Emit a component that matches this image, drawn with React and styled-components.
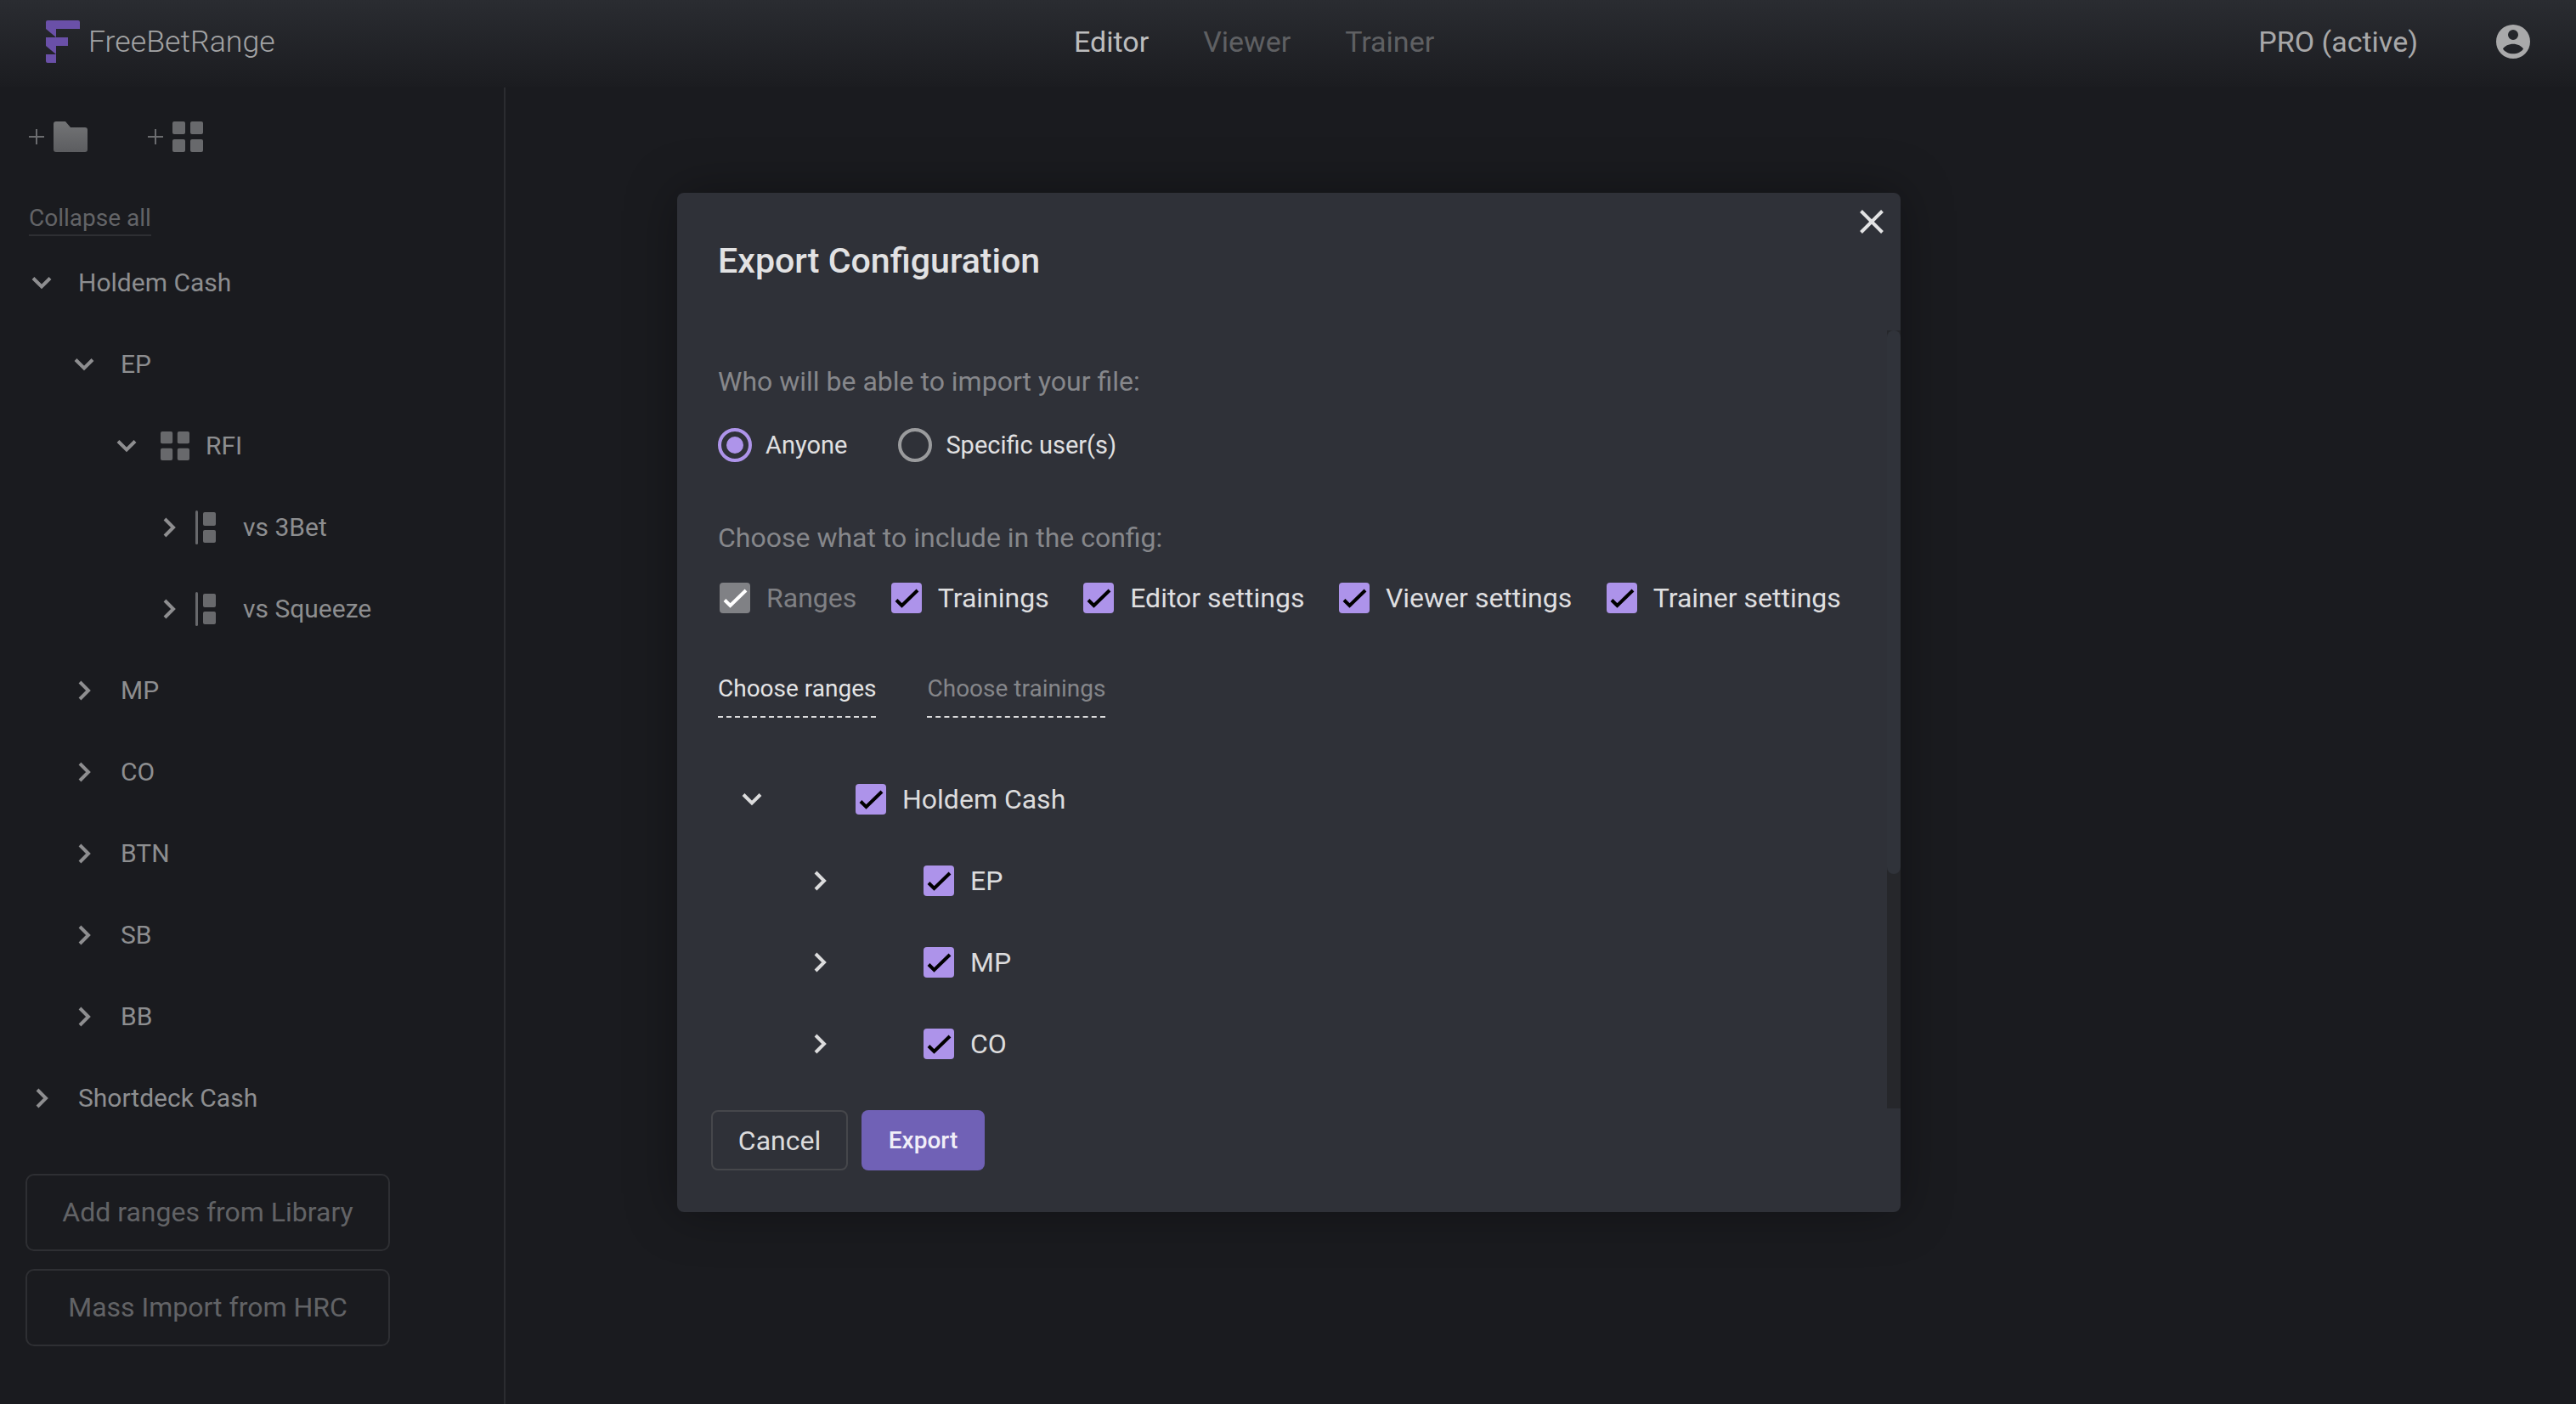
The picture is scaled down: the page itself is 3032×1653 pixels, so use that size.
import React from "react";
import styled, { createGlobalStyle } from "styled-components";

const Global = createGlobalStyle`
  html, body { margin: 0; padding: 0; background: #1a1b1f; }
  * { box-sizing: border-box; }
  #root { height: 100vh; overflow: hidden; }
`;

const Page = styled.div`
  position: relative;
  height: 1653px;
  background: #1a1b1f;
  font-family: Roboto, "Liberation Sans", sans-serif;
  display: flex;
  flex-direction: column;
  overflow: hidden;
`;

const Header = styled.header`
  flex: 0 0 103px;
  display: flex;
  align-items: center;
  padding: 0 54px 6px;
  background: linear-gradient(180deg, #2a2c31 0%, #1b1c20 100%);
`;

const Brand = styled.div`
  flex: 0 0 1210px;
  display: flex;
  align-items: center;
  gap: 10px;
  font-size: 35.7px;
  font-weight: 300;
  color: #a3a4a5;
`;

const Nav = styled.nav`
  display: flex;
  gap: 64px;
`;

const NavLink = styled.span`
  font-size: 34px;
  font-weight: 400;
  color: ${(p) => (p.$active ? "#bdbdbe" : "#5f6063")};
`;

const HeaderRight = styled.div`
  margin-left: auto;
  display: flex;
  align-items: center;
  gap: 92px;
  font-size: 34px;
  color: #a8a8a9;
`;

const Body = styled.div`
  flex: 1;
  display: flex;
  min-height: 0;
`;

const Sidebar = styled.aside`
  flex: 0 0 595px;
  border-right: 2px solid #2b2c30;
  padding-top: 40px;
`;

const Toolbar = styled.div`
  display: flex;
  align-items: center;
  height: 36px;
  padding-left: 34px;
`;

const ToolGroup = styled.div`
  display: flex;
  align-items: center;
  gap: 11px;
  margin-right: 71px;
`;

const Collapse = styled.span`
  display: inline-block;
  margin: 62px 0 0 34px;
  height: 37px;
  line-height: 32px;
  font-size: 28px;
  color: #636467;
  border-bottom: 2px solid #2e2f33;
`;

const Tree = styled.div`
  margin-top: 7px;
`;

const Row = styled.div`
  display: flex;
  align-items: center;
  height: 96px;
  padding-left: ${(p) => 37 + p.$depth * 50}px;
`;

const ChevronBox = styled.span`
  flex: 0 0 24px;
  display: flex;
  align-items: center;
  justify-content: center;
`;

const RowLabel = styled.span`
  margin-left: ${(p) => p.$gap}px;
  padding-bottom: 2px;
  font-size: 30px;
  color: #8d8e90;
`;

const RowIcon = styled.span`
  margin-left: ${(p) => p.$gap}px;
  display: flex;
`;

const SideButtons = styled.div`
  margin: 41px 0 0 30px;
  width: 429px;
  display: flex;
  flex-direction: column;
  gap: 21px;
`;

const SideButton = styled.button`
  height: 91px;
  padding: 0 0 2px;
  background: transparent;
  border: 2px solid #2e2f33;
  border-radius: 10px;
  font: 400 32px Roboto, "Liberation Sans", sans-serif;
  color: #626366;
`;

const Backdrop = styled.div`
  position: absolute;
  top: 227px;
  left: 797px;
`;

const Modal = styled.section`
  position: relative;
  width: 1440px;
  height: 1200px;
  background: #2f3138;
  border-radius: 8px;
  padding: 57px 48px 0;
  box-shadow: 0 0 60px rgba(0, 0, 0, 0.35);
  overflow: hidden;
`;

const Close = styled.span`
  position: absolute;
  top: 20px;
  right: 20px;
  display: flex;
`;

const ScrollTrack = styled.div`
  position: absolute;
  top: 162px;
  right: 0;
  width: 16px;
  height: 916px;
  background: #26272b;
`;

const ScrollThumb = styled.div`
  height: 640px;
  background: #30333a;
  border-radius: 8px;
`;

const Title = styled.h2`
  margin: 0;
  height: 46px;
  line-height: 46px;
  font-size: 41.1px;
  font-weight: 500;
  color: #e2e2e3;
`;

const SectionLabel = styled.div`
  margin-top: ${(p) => p.$top}px;
  height: 36px;
  line-height: 36px;
  font-size: 32px;
  color: #86878b;
`;

const RadioRow = styled.div`
  margin-top: 37px;
  display: flex;
  align-items: center;
  height: 40px;
`;

const RadioRing = styled.span`
  width: 40px;
  height: 40px;
  border-radius: 50%;
  border: 4px solid ${(p) => (p.$on ? "#ae94ea" : "#9a9b9d")};
  display: flex;
  align-items: center;
  justify-content: center;
  &::after {
    content: "";
    display: ${(p) => (p.$on ? "block" : "none")};
    width: 20px;
    height: 20px;
    border-radius: 50%;
    background: #ae94ea;
  }
`;

const RadioText = styled.span`
  margin: 0 60px 0 16px;
  font-size: 29px;
  color: #e0e0e1;
`;

const CheckRow = styled.div`
  margin-top: 35px;
  padding-left: 2px;
  display: flex;
  align-items: center;
  height: 36px;
  gap: 40.5px;
`;

const CheckItem = styled.label`
  display: flex;
  align-items: center;
  gap: 19px;
  font-size: 32px;
  color: ${(p) => (p.$disabled ? "#7f8084" : "#dfdfe0")};
`;

const Box = styled.span`
  flex: 0 0 36px;
  width: 36px;
  height: 36px;
  border-radius: 4px;
  background: ${(p) => (p.$disabled ? "#808185" : "#ad93ea")};
  display: flex;
`;

const Tabs = styled.div`
  margin-top: 71px;
  display: flex;
  gap: 60px;
`;

const Tab = styled.span`
  height: 52px;
  line-height: 36px;
  font-size: 28px;
  color: ${(p) => (p.$active ? "#e4e4e5" : "#85868a")};
  border-bottom: 2px dashed #dcdcdd;
`;

const ExportTree = styled.div`
  margin-top: 48px;
`;

const ExportRow = styled.div`
  display: flex;
  align-items: center;
  height: 96px;
  padding-left: ${(p) => 28 + p.$depth * 80}px;
`;

const ExportLabel = styled.span`
  margin-left: 19px;
  font-size: 32px;
  color: #dcdcdd;
`;

const BoxSlot = styled.span`
  margin-left: ${(p) => p.$gap}px;
  display: flex;
`;

const Footer = styled.div`
  margin: 30px 0 0 -8px;
  display: flex;
  gap: 16px;
`;

const Cancel = styled.button`
  width: 161px;
  height: 71px;
  background: transparent;
  border: 2px solid #46474b;
  border-radius: 8px;
  font: 400 32px Roboto, "Liberation Sans", sans-serif;
  color: #dcdcdd;
`;

const Export = styled.button`
  width: 145px;
  height: 71px;
  background: #7061b6;
  border: 0;
  border-radius: 8px;
  font: 500 28px Roboto, "Liberation Sans", sans-serif;
  color: #f0eef8;
`;

const Logo = () => (
  <svg width="40" height="50" viewBox="0 0 40 50" fill="#6a50a8">
    <path d="M2 0H38a2 2 0 0 1 2 2V10H12V20H26V30H12V50H2a2 2 0 0 1-2-2V40H12L0 30V20H12L0 10V2a2 2 0 0 1 2-2Z" />
  </svg>
);

const UserIcon = () => (
  <svg width="40" height="40" viewBox="0 0 40 40" fill="#a9a9aa">
    <path
      fillRule="evenodd"
      d="M20 0a20 20 0 1 0 0 40a20 20 0 0 0 0-40ZM20 6a6 6 0 1 1 0 12a6 6 0 0 1 0-12ZM8 28.500C10 25 15 22.700 20 22.700S30 25 32 28.500C30 32 25 34.300 20 34.300S10 32 8 28.500Z"
    />
  </svg>
);

const Plus = () => (
  <svg width="18" height="18" viewBox="0 0 18 18" stroke="#6b6c6f" strokeWidth="2">
    <path d="M0 9H18M9 0V18" />
  </svg>
);

const Folder = () => (
  <svg width="40" height="36" viewBox="0 0 40 36">
    <defs>
      <linearGradient id="fold" x1="0" y1="0" x2="0" y2="1">
        <stop offset="0" stopColor="#737476" />
        <stop offset="1" stopColor="#5c5d60" />
      </linearGradient>
    </defs>
    <path d="M3 0H14L20 7H37a3 3 0 0 1 3 3V33a3 3 0 0 1-3 3H3a3 3 0 0 1-3-3V3a3 3 0 0 1 3-3Z" fill="url(#fold)" />
  </svg>
);

const GridIcon = ({ w = 36, h = 36 }) => (
  <svg width={w} height={h} viewBox="0 0 36 36" preserveAspectRatio="none" fill="#68696c">
    <rect x="0" y="0" width="15" height="15" rx="2" />
    <rect x="21" y="0" width="15" height="15" rx="2" />
    <rect x="0" y="21" width="15" height="15" rx="2" />
    <rect x="21" y="21" width="15" height="15" rx="2" />
  </svg>
);

const SplitIcon = () => (
  <svg width="24" height="40" viewBox="0 0 24 40" fill="#68696c">
    <rect x="0" y="0" width="3" height="40" rx="1.500" />
    <rect x="9" y="2" width="15" height="16" rx="2" />
    <rect x="9" y="23" width="15" height="15" rx="2" />
  </svg>
);

const Chevron = ({ open, color = "#8e8e90" }) =>
  open ? (
    <svg width="24" height="16" viewBox="0 0 24 16" fill="none" stroke={color} strokeWidth="4">
      <path d="M2 2.500L12 12.500L22 2.500" />
    </svg>
  ) : (
    <svg width="16" height="24" viewBox="0 0 16 24" fill="none" stroke={color} strokeWidth="4">
      <path d="M3 2L13 12L3 22" />
    </svg>
  );

const Check = ({ color }) => (
  <svg width="36" height="36" viewBox="0 0 36 36" fill="none" stroke={color} strokeWidth="4">
    <path d="M6 20.500L12.500 27L31 9" />
  </svg>
);

const CloseIcon = () => (
  <svg width="28" height="28" viewBox="0 0 28 28" stroke="#e2e2e3" strokeWidth="4">
    <path d="M1.500 1.500L26.500 26.500M26.500 1.500L1.500 26.500" />
  </svg>
);

const sideRows = [
  { depth: 0, open: true, label: "Holdem Cash" },
  { depth: 1, open: true, label: "EP" },
  { depth: 2, open: true, label: "RFI", kind: "grid" },
  { depth: 3, label: "vs 3Bet", kind: "split" },
  { depth: 3, label: "vs Squeeze", kind: "split" },
  { depth: 1, label: "MP" },
  { depth: 1, label: "CO" },
  { depth: 1, label: "BTN" },
  { depth: 1, label: "SB" },
  { depth: 1, label: "BB" },
  { depth: 0, label: "Shortdeck Cash" },
];

const exportRows = [
  { depth: 0, open: true, label: "Holdem Cash" },
  { depth: 1, label: "EP" },
  { depth: 1, label: "MP" },
  { depth: 1, label: "CO" },
];

const checks = ["Trainings", "Editor settings", "Viewer settings", "Trainer settings"];

const labelGap = { grid: 19, split: 32 };

export default function App() {
  return (
    <Page>
      <Global />
      <Header>
        <Brand>
          <Logo />
          FreeBetRange
        </Brand>
        <Nav>
          <NavLink $active>Editor</NavLink>
          <NavLink>Viewer</NavLink>
          <NavLink>Trainer</NavLink>
        </Nav>
        <HeaderRight>
          PRO (active)
          <UserIcon />
        </HeaderRight>
      </Header>
      <Body>
        <Sidebar>
          <Toolbar>
            <ToolGroup>
              <Plus />
              <Folder />
            </ToolGroup>
            <ToolGroup>
              <Plus />
              <GridIcon />
            </ToolGroup>
          </Toolbar>
          <Collapse>Collapse all</Collapse>
          <Tree>
            {sideRows.map((r) => (
              <Row key={r.depth + r.label} $depth={r.depth}>
                <ChevronBox>
                  <Chevron open={r.open} />
                </ChevronBox>
                {r.kind === "grid" && (
                  <RowIcon $gap={28}>
                    <GridIcon w={34} h={34} />
                  </RowIcon>
                )}
                {r.kind === "split" && (
                  <RowIcon $gap={19}>
                    <SplitIcon />
                  </RowIcon>
                )}
                <RowLabel $gap={labelGap[r.kind] ?? 31}>{r.label}</RowLabel>
              </Row>
            ))}
          </Tree>
          <SideButtons>
            <SideButton>Add ranges from Library</SideButton>
            <SideButton>Mass Import from HRC</SideButton>
          </SideButtons>
        </Sidebar>
      </Body>
      <Backdrop>
        <Modal>
          <Close>
            <CloseIcon />
          </Close>
          <ScrollTrack>
            <ScrollThumb />
          </ScrollTrack>
          <Title>Export Configuration</Title>
          <SectionLabel $top={101}>Who will be able to import your file:</SectionLabel>
          <RadioRow>
            <RadioRing $on />
            <RadioText>Anyone</RadioText>
            <RadioRing />
            <RadioText>Specific user(s)</RadioText>
          </RadioRow>
          <SectionLabel $top={71}>Choose what to include in the config:</SectionLabel>
          <CheckRow>
            <CheckItem $disabled>
              <Box $disabled>
                <Check color="#ffffff" />
              </Box>
              Ranges
            </CheckItem>
            {checks.map((c) => (
              <CheckItem key={c}>
                <Box>
                  <Check color="#000000" />
                </Box>
                {c}
              </CheckItem>
            ))}
          </CheckRow>
          <Tabs>
            <Tab $active>Choose ranges</Tab>
            <Tab>Choose trainings</Tab>
          </Tabs>
          <ExportTree>
            {exportRows.map((r) => (
              <ExportRow key={r.label} $depth={r.depth}>
                <ChevronBox>
                  <Chevron open={r.open} color="#dcdcdd" />
                </ChevronBox>
                <BoxSlot $gap={110}>
                  <Box>
                    <Check color="#000000" />
                  </Box>
                </BoxSlot>
                <ExportLabel>{r.label}</ExportLabel>
              </ExportRow>
            ))}
          </ExportTree>
          <Footer>
            <Cancel>Cancel</Cancel>
            <Export>Export</Export>
          </Footer>
        </Modal>
      </Backdrop>
    </Page>
  );
}
